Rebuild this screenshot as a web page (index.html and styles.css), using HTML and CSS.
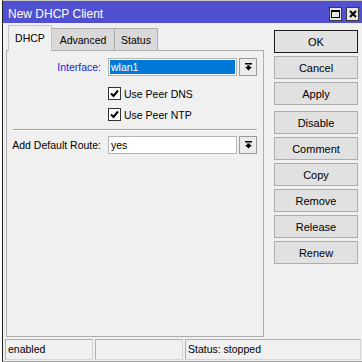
FILE: index.html
```html
<!DOCTYPE html>
<html lang="en">
<head>
  <meta charset="UTF-8" />
  <title>New DHCP Client</title>
  <link rel="stylesheet" href="styles.css">
</head>
<body>

<div class="window">
  <div class="titlebar">
    <span class="title">New DHCP Client</span>
    <div class="tb-btns">
      <span class="tb-btn max"><span class="max-box"></span></span>
      <span class="tb-btn close">
        <svg width="10" height="12" viewBox="0 0 10 12"><path d="M2 3 L8 9 M8 3 L2 9" stroke="#000" stroke-width="2"/></svg>
      </span>
    </div>
  </div>

  <div class="content">
    <div class="main">
      <div class="tabs">
        <div class="tab active">DHCP</div>
        <div class="tab">Advanced</div>
        <div class="tab">Status</div>
      </div>
      <div class="panel">
        <div class="row first">
          <label class="lbl blue">Interface:</label>
          <div class="combo">
            <div class="field"><span class="selected">wlan1</span></div>
            <div class="drop">
              <svg width="9" height="8" viewBox="0 0 9 8"><rect x="1" y="0" width="7" height="1.5"/><rect x="3" y="2.5" width="3" height="1.5"/><polygon points="1,4 8,4 4.5,7.5"/></svg>
            </div>
          </div>
        </div>
        <div class="check-row">
          <span class="check"><svg width="11" height="11" viewBox="0 0 11 11"><path d="M2 5.5 L4.5 8 L9 2.5" fill="none" stroke="#000" stroke-width="2"/></svg></span>
          Use Peer DNS
        </div>
        <div class="check-row second">
          <span class="check"><svg width="11" height="11" viewBox="0 0 11 11"><path d="M2 5.5 L4.5 8 L9 2.5" fill="none" stroke="#000" stroke-width="2"/></svg></span>
          Use Peer NTP
        </div>
        <div class="sep"></div>
        <div class="row">
          <label class="lbl">Add Default Route:</label>
          <div class="combo">
            <div class="field"><span class="plain">yes</span></div>
            <div class="drop">
              <svg width="9" height="8" viewBox="0 0 9 8"><rect x="1" y="0" width="7" height="1.5"/><rect x="3" y="2.5" width="3" height="1.5"/><polygon points="1,4 8,4 4.5,7.5"/></svg>
            </div>
          </div>
        </div>
      </div>
    </div>

    <div class="buttons">
      <button class="btn default">OK</button>
      <button class="btn">Cancel</button>
      <button class="btn">Apply</button>
      <button class="btn group">Disable</button>
      <button class="btn">Comment</button>
      <button class="btn">Copy</button>
      <button class="btn">Remove</button>
      <button class="btn">Release</button>
      <button class="btn">Renew</button>
    </div>
  </div>

  <div class="statusbar">
    <div class="cell">enabled</div>
    <div class="cell"></div>
    <div class="cell wide">Status: stopped</div>
  </div>
</div>

</body>
</html>
```

FILE: styles.css
```css
body {
  margin: 0;
  background: #fff;
  font-family: "Liberation Sans", Arial, sans-serif;
  font-size: 10.5px;
  color: #000;
}

.window {
  margin-left: 2px;
  width: 359px;
  height: 360px;
  border-left: 1px solid #1e1e1e;
  border-top: 1px solid #c8c8c8;
  border-bottom: 1px solid #a0a0a0;
  background: #f0f0f0;
  display: flex;
  flex-direction: column;
}

/* Title bar */
.titlebar {
  height: 22px;
  background: #5050d0;
  color: #fff;
  display: flex;
  align-items: flex-start;
  padding-left: 5px;
  font-size: 12px;
}

.title {
  line-height: 14px;
  margin-top: 6px;
}

.tb-btns {
  margin-left: auto;
  margin-top: 6px;
  padding-right: 3px;
  display: flex;
  gap: 4px;
}

.tb-btn {
  width: 13px;
  height: 14px;
  box-sizing: border-box;
  border: 1px solid #3a3a3a;
  background: #e6e6e6;
  display: flex;
  align-items: center;
  justify-content: center;
}

.max-box {
  width: 9px;
  height: 8px;
  box-sizing: border-box;
  border: 1px solid #000;
  border-top-width: 2px;
}

/* Main area */
.content {
  flex: 1;
  display: flex;
  padding: 2px 4px 2px 3px;
}

.main {
  width: 258px;
  display: flex;
  flex-direction: column;
}

.tabs {
  display: flex;
  align-items: flex-end;
  padding-left: 2px;
  height: 25px;
}

.tab {
  height: 22px;
  box-sizing: border-box;
  border: 1px solid #adadad;
  border-bottom: none;
  border-left: none;
  background: #d9d9d9;
  display: flex;
  align-items: center;
  justify-content: center;
}

.tab:nth-child(2) { width: 63px; }
.tab:nth-child(3) { width: 43px; }

.tab.active {
  width: 44px;
  height: 26px;
  margin-bottom: -1px;
  background: #f0f0f0;
  border-left: 1px solid #d0d0d0;
  border-color: #c4c4c4;
  padding-bottom: 2px;
  position: relative;
  z-index: 1;
}

.panel {
  flex: 1;
  border: 1px solid #adadad;
  display: flex;
  flex-direction: column;
}

.row {
  display: flex;
  align-items: center;
  height: 18px;
  margin-top: 5px;
}

.row.first {
  margin-top: 7px;
}

.lbl {
  width: 94px;
  margin-right: 7px;
  text-align: right;
}

.lbl.blue {
  color: #2020e8;
}

.combo {
  display: flex;
  gap: 2px;
}

.field {
  width: 129px;
  height: 18px;
  box-sizing: border-box;
  border: 1px solid #b4b4b4;
  background: #fff;
  padding: 1px;
  display: flex;
}

.field .selected,
.field .plain {
  flex: 1;
  padding-left: 1px;
  line-height: 14px;
}

.field .selected {
  background: #0078d7;
  color: #fff;
}

.drop {
  width: 18px;
  height: 18px;
  box-sizing: border-box;
  border: 1px solid #9a9a9a;
  background: #ececec;
  display: flex;
  align-items: center;
  justify-content: center;
}

.check-row {
  display: flex;
  align-items: center;
  height: 13px;
  margin-top: 11px;
  padding-left: 101px;
}

.check-row.second {
  margin-top: 8px;
}

.check {
  width: 13px;
  height: 13px;
  box-sizing: border-box;
  border: 1px solid #333;
  background: #fff;
  margin-right: 3px;
  display: flex;
  align-items: center;
  justify-content: center;
}

.sep {
  margin: 8px 6px 0 6px;
  border-top: 1px solid #a0a0a0;
  border-bottom: 1px solid #fff;
}

/* Buttons */
.buttons {
  width: 84px;
  margin-left: 10px;
  padding-top: 5px;
  display: flex;
  flex-direction: column;
  gap: 3px;
}

.btn {
  height: 23px;
  box-sizing: border-box;
  border: 1px solid #adadad;
  background: #e1e1e1;
  font-family: inherit;
  font-size: 11px;
  color: #000;
  padding: 0;
}

.btn.default {
  border-color: #1a1a1a;
}

.btn.group {
  margin-top: 3px;
}

/* Status bar */
.statusbar {
  height: 22px;
  display: flex;
  gap: 2px;
  padding-left: 2px;
}

.cell {
  width: 88px;
  height: 21px;
  box-sizing: border-box;
  border: 1px solid #d4d4d4;
  border-top-color: #b0b0b0;
  border-left-color: #b0b0b0;
  padding-left: 2px;
  line-height: 19px;
}

.cell.wide {
  width: 176px;
}
```
